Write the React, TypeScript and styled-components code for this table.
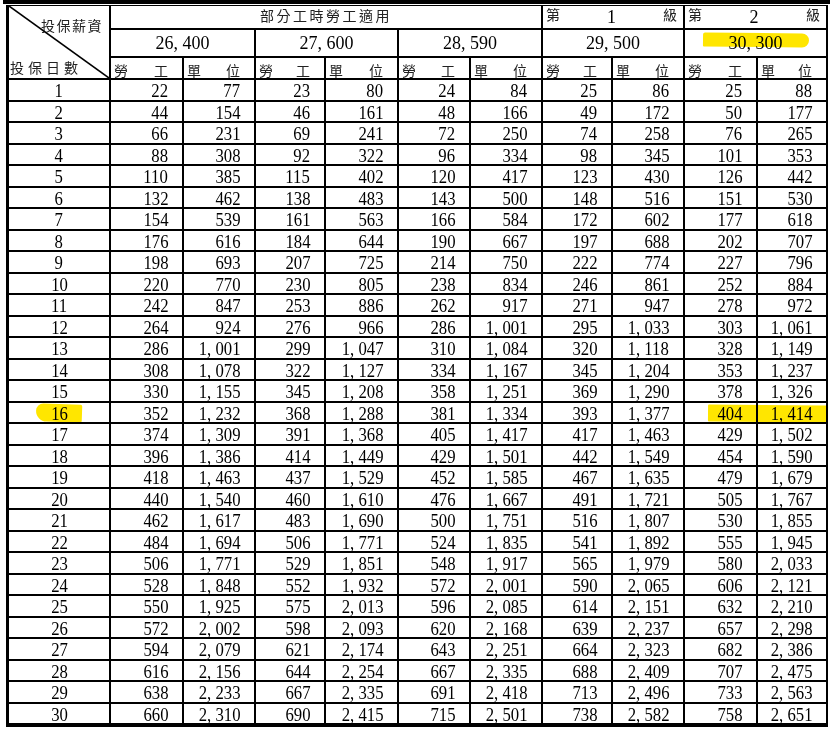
import React from "react";
import styled, { createGlobalStyle } from "styled-components";

const GlobalStyle = createGlobalStyle`
  * { box-sizing: border-box; }
  html, body { margin: 0; padding: 0; background: #fff; }
  body {
    font-family: "Liberation Serif", "Noto Sans CJK TC", serif;
    color: #000;
  }
`;

const Page = styled.div`
  position: relative;
  width: 830px;
  height: 736px;
  padding-left: 3px;
  background: #fff;
  overflow: hidden;
`;

const Sheet = styled.div`
  border-top: 4px solid #000;
  padding: 1px 0 0 3px;
`;

const Table = styled.table`
  width: 822px;
  table-layout: fixed;
  border-collapse: separate;
  border-spacing: 0;
  border-left: 3px solid #000;
  border-top: 1px solid #000;
  border-bottom: 2px solid #000;
`;

const Row = styled.tr<{ $h: number }>`
  height: ${({ $h }) => $h}px;
`;

const Cell = styled.td<{ $valign?: string }>`
  border-right: 2px solid #000;
  border-bottom: 2px solid #000;
  padding: 0;
  vertical-align: ${({ $valign }) => $valign || "top"};
  white-space: nowrap;
`;

const NumCell = styled(Cell)<{ $center?: boolean }>`
  text-align: ${({ $center }) => ($center ? "center" : "right")};
  padding: 2px ${({ $center }) => ($center ? "0" : "14px")} 0 0;
  font-size: 19px;
  line-height: 17.5px;
`;

const Num = styled.span<{ $center?: boolean }>`
  display: inline-block;
  transform: scaleX(0.88);
  transform-origin: ${({ $center }) => ($center ? "center" : "right")} center;
`;

const Comma = styled.span`
  display: inline-block;
  width: 0.5em;
  text-align: left;
`;

const WageCell = styled(Cell)`
  text-align: center;
  vertical-align: middle;
  font-size: 18px;
  line-height: 20px;
`;

const Cjk = styled.span<{ $size?: number; $spacing?: number }>`
  font-family: "Noto Sans CJK TC", "Liberation Serif", sans-serif;
  font-size: ${({ $size }) => $size || 14}px;
  letter-spacing: ${({ $spacing }) => $spacing || 0}px;
  line-height: 1;
  color: #222;
`;

const TitleCell = styled(Cell)`
  text-align: center;
  vertical-align: bottom;
  padding-bottom: 3px;
`;

const Spread = styled.div<{ $right?: number }>`
  display: flex;
  justify-content: space-between;
  align-items: flex-end;
  padding: 0 ${({ $right }) => $right ?? 14}px 1px 3px;
`;

const GradeSpread = styled(Spread)`
  height: 22px;
  align-items: flex-start;
  padding-top: 1px;
`;

const GradeNo = styled.span`
  align-self: flex-end;
  font-size: 18px;
  line-height: 20px;
`;

const Corner = styled.div`
  position: relative;
  height: 72px;
  display: flex;
  flex-direction: column;
  justify-content: space-between;
  padding: 11px 6px 1px 1px;
`;

const CornerTop = styled.div`
  align-self: flex-end;
`;

const CornerBottom = styled.div`
  align-self: flex-start;
`;

const Diagonal = styled.svg`
  position: absolute;
  inset: 0;
  width: 100%;
  height: 100%;
  pointer-events: none;
`;

const Marker = styled.span<{
  $x: number;
  $y: number;
  $w: number;
  $h: number;
  $r: string;
  $rot: number;
}>`
  position: absolute;
  left: ${({ $x }) => $x}px;
  top: ${({ $y }) => $y}px;
  width: ${({ $w }) => $w}px;
  height: ${({ $h }) => $h}px;
  border-radius: ${({ $r }) => $r};
  transform: rotate(${({ $rot }) => $rot}deg);
  background: #ffe600;
  mix-blend-mode: multiply;
  pointer-events: none;
`;

const widths = [102, 73, 72, 70, 73, 72, 72, 70, 72, 73, 70];
const wages = [26400, 27600, 28590, 29500, 30300];

// [勞工, 單位] per wage column, day 1..30
const data: number[][] = [
  [22, 77, 23, 80, 24, 84, 25, 86, 25, 88],
  [44, 154, 46, 161, 48, 166, 49, 172, 50, 177],
  [66, 231, 69, 241, 72, 250, 74, 258, 76, 265],
  [88, 308, 92, 322, 96, 334, 98, 345, 101, 353],
  [110, 385, 115, 402, 120, 417, 123, 430, 126, 442],
  [132, 462, 138, 483, 143, 500, 148, 516, 151, 530],
  [154, 539, 161, 563, 166, 584, 172, 602, 177, 618],
  [176, 616, 184, 644, 190, 667, 197, 688, 202, 707],
  [198, 693, 207, 725, 214, 750, 222, 774, 227, 796],
  [220, 770, 230, 805, 238, 834, 246, 861, 252, 884],
  [242, 847, 253, 886, 262, 917, 271, 947, 278, 972],
  [264, 924, 276, 966, 286, 1001, 295, 1033, 303, 1061],
  [286, 1001, 299, 1047, 310, 1084, 320, 1118, 328, 1149],
  [308, 1078, 322, 1127, 334, 1167, 345, 1204, 353, 1237],
  [330, 1155, 345, 1208, 358, 1251, 369, 1290, 378, 1326],
  [352, 1232, 368, 1288, 381, 1334, 393, 1377, 404, 1414],
  [374, 1309, 391, 1368, 405, 1417, 417, 1463, 429, 1502],
  [396, 1386, 414, 1449, 429, 1501, 442, 1549, 454, 1590],
  [418, 1463, 437, 1529, 452, 1585, 467, 1635, 479, 1679],
  [440, 1540, 460, 1610, 476, 1667, 491, 1721, 505, 1767],
  [462, 1617, 483, 1690, 500, 1751, 516, 1807, 530, 1855],
  [484, 1694, 506, 1771, 524, 1835, 541, 1892, 555, 1945],
  [506, 1771, 529, 1851, 548, 1917, 565, 1979, 580, 2033],
  [528, 1848, 552, 1932, 572, 2001, 590, 2065, 606, 2121],
  [550, 1925, 575, 2013, 596, 2085, 614, 2151, 632, 2210],
  [572, 2002, 598, 2093, 620, 2168, 639, 2237, 657, 2298],
  [594, 2079, 621, 2174, 643, 2251, 664, 2323, 682, 2386],
  [616, 2156, 644, 2254, 667, 2335, 688, 2409, 707, 2475],
  [638, 2233, 667, 2335, 691, 2418, 713, 2496, 733, 2563],
  [660, 2310, 690, 2415, 715, 2501, 738, 2582, 758, 2651],
];

const Figure = ({ value }: { value: number }) => {
  const parts = value.toLocaleString("en-US").split(",");
  return (
    <>
      {parts.map((p, i) => (
        <React.Fragment key={i}>
          {i > 0 && <Comma>,</Comma>}
          {p}
        </React.Fragment>
      ))}
    </>
  );
};

export default function App() {
  return (
    <Page>
      <GlobalStyle />
      <Sheet>
        <Table>
          <colgroup>
            {widths.map((w, i) => (
              <col key={i} style={{ width: w }} />
            ))}
          </colgroup>
          <tbody>
            <Row $h={24}>
              <Cell rowSpan={3}>
                <Corner>
                  <Diagonal viewBox="0 0 100 100" preserveAspectRatio="none">
                    <line x1="0" y1="0" x2="100" y2="100" stroke="#000" strokeWidth="1.6" vectorEffect="non-scaling-stroke" />
                  </Diagonal>
                  <CornerTop>
                    <Cjk $size={14} $spacing={1.5}>投保薪資</Cjk>
                  </CornerTop>
                  <CornerBottom>
                    <Cjk $size={14} $spacing={4}>投保日數</Cjk>
                  </CornerBottom>
                </Corner>
              </Cell>
              <TitleCell colSpan={6}>
                <Cjk $size={14} $spacing={2.5}>部分工時勞工適用</Cjk>
              </TitleCell>
              <Cell colSpan={2}>
                <GradeSpread $right={6}>
                  <Cjk>第</Cjk>
                  <GradeNo>1</GradeNo>
                  <Cjk>級</Cjk>
                </GradeSpread>
              </Cell>
              <Cell colSpan={2}>
                <GradeSpread $right={6}>
                  <Cjk>第</Cjk>
                  <GradeNo>2</GradeNo>
                  <Cjk>級</Cjk>
                </GradeSpread>
              </Cell>
            </Row>
            <Row $h={28}>
              {wages.map((w) => (
                <WageCell key={w} colSpan={2}>
                  <Figure value={w} />
                </WageCell>
              ))}
            </Row>
            <Row $h={22}>
              {wages.map((w) => (
                <React.Fragment key={w}>
                  <Cell $valign="bottom">
                    <Spread>
                      <Cjk>勞</Cjk>
                      <Cjk>工</Cjk>
                    </Spread>
                  </Cell>
                  <Cell $valign="bottom">
                    <Spread>
                      <Cjk>單</Cjk>
                      <Cjk>位</Cjk>
                    </Spread>
                  </Cell>
                </React.Fragment>
              ))}
            </Row>
            {data.map((row, d) => (
              <Row key={d} $h={21.5}>
                <NumCell $center>
                  <Num $center>{d + 1}</Num>
                </NumCell>
                {row.map((v, i) => (
                  <NumCell key={i}>
                    <Num>
                      <Figure value={v} />
                    </Num>
                  </NumCell>
                ))}
              </Row>
            ))}
          </tbody>
        </Table>
      </Sheet>
      <Marker $x={703} $y={33} $w={106} $h={14} $r="2px 7px 7px 1px" $rot={0.6} />
      <Marker $x={36} $y={404} $w={46} $h={18} $r="8px 2px 2px 12px" $rot={2} />
      <Marker $x={708} $y={405} $w={120} $h={17} $r="1px" $rot={0.5} />
    </Page>
  );
}
